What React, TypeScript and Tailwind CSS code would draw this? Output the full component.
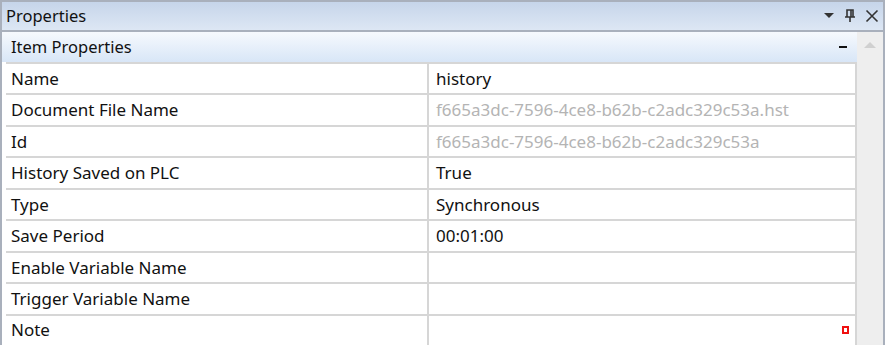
import React from 'react';

type Row = { name: string; value: string; muted?: boolean; note?: boolean };

const rows: Row[] = [
  { name: 'Name', value: 'history' },
  { name: 'Document File Name', value: 'f665a3dc-7596-4ce8-b62b-c2adc329c53a.hst', muted: true },
  { name: 'Id', value: 'f665a3dc-7596-4ce8-b62b-c2adc329c53a', muted: true },
  { name: 'History Saved on PLC', value: 'True' },
  { name: 'Type', value: 'Synchronous' },
  { name: 'Save Period', value: '00:01:00' },
  { name: 'Enable Variable Name', value: '' },
  { name: 'Trigger Variable Name', value: '' },
  { name: 'Note', value: '', note: true },
];

const App: React.FC = () => {
  return (
    <div
      className="w-[885px] h-[345px] overflow-hidden bg-white flex flex-col border-l-2 border-t-2 border-r-2 border-[#a9b0bc] text-[#111] text-[16.5px]"
      style={{ fontFamily: '"Segoe UI", "Noto Sans", "Open Sans", sans-serif' }}
    >
      {/* Title bar */}
      <div className="h-[30px] shrink-0 flex items-center justify-between pl-[4px] pr-[4px] bg-gradient-to-b from-[#c6d5ea] to-[#dde7f4] border-b-2 border-[#a9b0bc]">
        <span className="leading-none">Properties</span>
        <div className="flex items-center gap-[9px] text-[#333]">
          <svg width="12" height="8" viewBox="0 0 12 8">
            <path d="M1 1h10L6 6z" fill="#333" />
          </svg>
          <svg width="12" height="14" viewBox="0 0 12 14">
            <path d="M3 1h6v7H3zM1 8h10M6 8v5M7 1v7" fill="none" stroke="#333" strokeWidth="1.6" />
          </svg>
          <svg width="14" height="14" viewBox="0 0 14 14">
            <path d="M1.5 1.5l11 11M12.5 1.5l-11 11" stroke="#333" strokeWidth="1.6" />
          </svg>
        </div>
      </div>

      <div className="flex flex-1 min-h-0">
        {/* Grid */}
        <div className="flex-1 flex flex-col">
          <div className="h-[30px] shrink-0 flex items-center justify-between pl-[9px] pr-[8px] bg-gradient-to-b from-[#f6f9fd] to-[#d8e6f7]">
            <span>Item Properties</span>
            <span className="w-[8px] h-[2px] bg-[#111] mr-[2px]" />
          </div>
          <div className="flex-1 flex flex-col pl-[4px] text-[17px]">
            {rows.map((r) => (
              <div key={r.name} className="flex-1 flex border-t-2 border-[#d6d6d6] border-r-2">
                <div className="w-[423px] shrink-0 flex items-center pl-[5px] border-r-2 border-[#d6d6d6]">
                  {r.name}
                </div>
                <div className={`flex-1 flex items-center justify-between pl-[7px] pr-[6px] ${r.muted ? 'text-[#b4b4b4]' : ''}`}>
                  <span>{r.value}</span>
                  {r.note && <span className="w-[7px] h-[8px] border-2 border-[#f01010] bg-white" />}
                </div>
              </div>
            ))}
          </div>
        </div>

        {/* Scrollbar */}
        <div className="w-[26px] shrink-0 bg-[#eeeeee] flex justify-center pt-[9px]">
          <svg width="12" height="7" viewBox="0 0 12 7">
            <path d="M0 7L6 1l6 6z" fill="#d0d0d0" />
          </svg>
        </div>
      </div>
    </div>
  );
};

export default App;
